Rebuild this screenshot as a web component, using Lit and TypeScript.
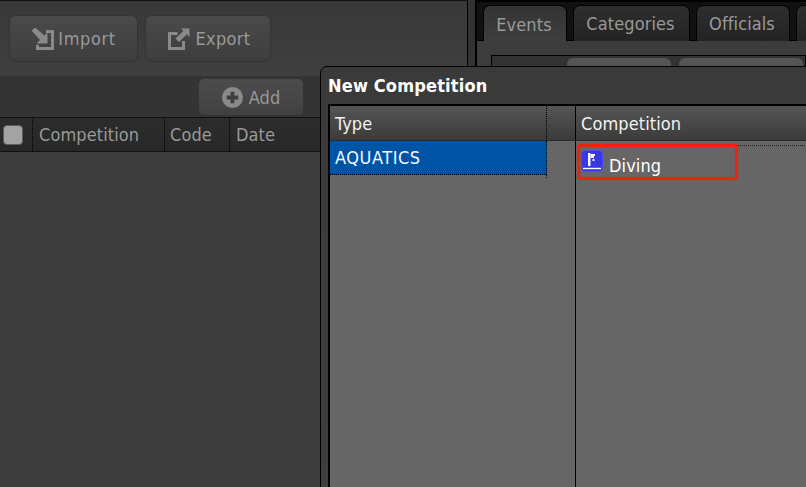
import { LitElement, html, css, svg } from "lit";
import { customElement } from "lit/decorators.js";

const importIcon = svg`<svg class="ic" width="24" height="24" viewBox="0 0 24 24"><path d="M0.500 3.500L4 0.500L13.500 8.500L16.500 5.500V16.500H5.500L9 13Z" fill="#8a8a8a"/><path d="M15 4.500H21.500V21.500H6.500V18" fill="none" stroke="#8a8a8a" stroke-width="3"/></svg>`;
const exportIcon = svg`<svg class="ic" width="22" height="22" viewBox="0 0 22 22"><path d="M9.500 5.500H1.500V20.500H15.500V13" fill="none" stroke="#8a8a8a" stroke-width="3"/><path d="M13 0.500H21.500V9L18.800 6.300L11 14L7.500 10.500L15.300 3Z" fill="#8a8a8a"/></svg>`;
const addIcon = svg`<svg class="ic" width="21" height="21" viewBox="0 0 20 20"><circle cx="10" cy="10" r="10" fill="#8a8a8a"/><path d="M4.500 10H15.500M10 4.500V15.500" stroke="#3f3f3f" stroke-width="3.600"/></svg>`;
const flagIcon = svg`<svg width="22" height="22" viewBox="0 0 22 22"><rect x="0.500" y="0.500" width="21" height="21" rx="4" fill="#3838e6" stroke="#4c4cf0"/><path d="M2 18.500H20" stroke="#fff" stroke-width="1.400"/><path d="M7 3H9.500V16H7Z" fill="#f4f4ff"/><path d="M9.500 4H14V6H13V8H9.500Z" fill="#f4f4ff"/><rect x="11.500" y="9" width="2" height="2" fill="#f4f4ff"/></svg>`;

@customElement("app-root")
export class AppRoot extends LitElement {
  static styles = css`
    :host {
      display: block;
      position: relative;
      width: 806px;
      height: 487px;
      overflow: hidden;
      background: #333;
      font-family: "DejaVu Sans", sans-serif;
      font-stretch: condensed;
      font-size: 18px;
      letter-spacing: 0.1px;
    }
    .page { display: flex; height: 487px; }
    .left {
      width: 467px;
      flex: none;
      border-top: 1px solid #111;
      border-right: 1px solid #000;
      background: #3b3b3b;
      display: flex;
      flex-direction: column;
    }
    .tools {
      height: 75px;
      box-sizing: border-box;
      padding: 14px 0 0 9px;
      display: flex;
      gap: 7px;
      align-items: flex-start;
      background: linear-gradient(#383838, #3f3f3f);
    }
    .btn {
      box-sizing: border-box;
      display: flex;
      align-items: center;
      justify-content: center;
      gap: 3px;
      color: #999;
      border: 1px solid #333;
      border-radius: 7px;
      background: linear-gradient(#4a4a4a, #3d3d3d);
    }
    .imp { width: 129px; height: 47px; letter-spacing: 0.6px; }
    .exp { width: 126px; height: 47px; padding-left: 2px; gap: 6px; letter-spacing: 0.3px; }
    .addbar {
      height: 41px;
      box-sizing: border-box;
      background: #343434;
      padding: 3px 164px 0 0;
      display: flex;
      justify-content: flex-end;
    }
    .add {
      width: 104px;
      height: 36px;
      gap: 6px;
      border: none;
      border-radius: 5px;
      background: linear-gradient(#4c4c4c, #414141);
    }
    .thead {
      height: 35px;
      box-sizing: border-box;
      display: flex;
      border-top: 1px solid #111;
      border-bottom: 1px solid #111;
      background: linear-gradient(#2c2c2c, #282828);
      color: #999;
    }
    .thead > div {
      display: flex;
      align-items: center;
      box-sizing: border-box;
      padding-left: 6px;
      border-right: 1px dotted #000;
    }
    .c0 { width: 33px; padding-left: 3px !important; }
    .c1 { width: 132px; }
    .c2 { width: 65px; padding-left: 5px !important; }
    .c3 { border-right: none !important; }
    .check {
      width: 20px;
      height: 20px;
      box-sizing: border-box;
      background: #a3a3a3;
      border: 1px solid #5c5c5c;
      border-radius: 4px;
    }
    .lbody { flex: 1; background: #3c3c3c; }
    .gap { width: 7px; flex: none; background: #333; }
    .right {
      flex: 1;
      min-width: 0;
      border-left: 2px solid #000;
      border-top: 2px solid #000;
      background: #2a2a2a;
      display: flex;
      flex-direction: column;
    }
    .tabs {
      display: flex;
      gap: 6px;
      padding: 3px 0 0 6px;
      height: 39px;
      box-sizing: border-box;
      border-bottom: 1px solid #000;
      background: #111;
      white-space: nowrap;
    }
    .tab {
      box-sizing: border-box;
      flex: none;
      height: 36px;
      padding-right: 2px;
      display: flex;
      align-items: center;
      justify-content: center;
      color: #999;
      border: 1px solid #000;
      border-bottom: none;
      border-radius: 7px 7px 0 0;
      background: linear-gradient(#2e2e2e, #232323);
    }
    .tab.on { background: linear-gradient(#333, #3f3f3f); height: 37px; margin-bottom: -1px; }
    .pane { flex: 1; background: #3c3c3c; padding: 14px 0 0 14px; }
    .inner {
      height: 100%;
      border: 1px solid #000;
      background: #333;
      padding: 2px 0 0 75px;
      display: flex;
      gap: 8px;
      align-items: flex-start;
    }
    .ghost { height: 30px; border-radius: 6px 6px 0 0; background: #555; flex: none; }
    .g1 { width: 104px; }
    .g2 { width: 124px; }
    .dialog {
      position: absolute;
      left: 320px;
      top: 66px;
      width: 520px;
      height: 440px;
      box-sizing: border-box;
      border: 1px solid #000;
      border-radius: 7px 0 0 0;
      background: linear-gradient(#3a3a3a, #3e3e3e);
      padding: 9px 0 0 7px;
      display: flex;
      flex-direction: column;
    }
    .title {
      font-weight: 700;
      color: #fff;
      height: 28px;
      line-height: 20px;
      letter-spacing: 0.17px;
    }
    .grid {
      flex: 1;
      display: flex;
      border-top: 2px solid #000;
      border-left: 2px solid #000;
      background: #666;
    }
    .col1 { width: 245px; flex: none; border-right: 1px solid #000; display: flex; flex-direction: column; }
    .col2 { flex: 1; display: flex; flex-direction: column; }
    .hd {
      height: 35px;
      flex: none;
      box-sizing: border-box;
      background: linear-gradient(#555, #3b3b3b);
      color: #f2f2f2;
      display: flex;
      align-items: center;
      padding: 1px 0 0 5px;
      border-bottom: 1px solid #2a2a2a;
    }
    .hd1 { width: 217px; border-right: 1px dotted #000; }
    .hd2 { flex: 1; }
    .hrow { display: flex; height: 35px; flex: none; }
    .sel {
      width: 217px;
      height: 34px;
      flex: none;
      box-sizing: border-box;
      background: #0054a6;
      color: #f4faff;
      padding-left: 5px;
      display: flex;
      align-items: center;
      letter-spacing: 0.55px;
      border-bottom: 1px dotted #000;
      border-right: 1px dotted #000;
    }
    .stub { width: 217px; height: 3px; box-sizing: border-box; border-right: 1px dotted #000; }
    .rowwrap { padding: 3px 0 0 1px; position: relative; }
    .dots {
      position: absolute;
      left: 162px;
      right: 0;
      top: 4px;
      border-top: 1px dotted #222;
    }
    .mark {
      width: 161px;
      height: 36px;
      box-sizing: border-box;
      border: 3px solid #ee2211;
      border-radius: 3px;
      box-shadow: 0 0 1px #ee2211, inset 0 0 1px #ee2211;
      padding: 3px 0 0 1px;
      display: flex;
      gap: 6px;
      color: #fff;
    }
    .mark span { padding-top: 6px; line-height: 20px; }
  `;

  render() {
    return html`
      <div class="page">
        <section class="left">
          <div class="tools">
            <div class="btn imp">${importIcon}<span>Import</span></div>
            <div class="btn exp">${exportIcon}<span>Export</span></div>
          </div>
          <div class="addbar"><div class="btn add">${addIcon}<span>Add</span></div></div>
          <div class="thead">
            <div class="c0"><div class="check"></div></div>
            <div class="c1">Competition</div>
            <div class="c2">Code</div>
            <div class="c3">Date</div>
          </div>
          <div class="lbody"></div>
        </section>
        <div class="gap"></div>
        <section class="right">
          <div class="tabs">
            <div class="tab on" style="width:84px">Events</div>
            <div class="tab" style="width:117px">Categories</div>
            <div class="tab" style="width:94px">Officials</div>
            <div class="tab" style="width:60px"></div>
          </div>
          <div class="pane">
            <div class="inner"><div class="ghost g1"></div><div class="ghost g2"></div></div>
          </div>
        </section>
      </div>
      <div class="dialog">
        <div class="title">New Competition</div>
        <div class="grid">
          <div class="col1">
            <div class="hrow"><div class="hd hd1">Type</div><div class="hd hd2"></div></div>
            <div class="sel">AQUATICS</div>
            <div class="stub"></div>
          </div>
          <div class="col2">
            <div class="hd">Competition</div>
            <div class="rowwrap">
              <div class="dots"></div>
              <div class="mark">${flagIcon}<span>Diving</span></div>
            </div>
          </div>
        </div>
      </div>
    `;
  }
}
